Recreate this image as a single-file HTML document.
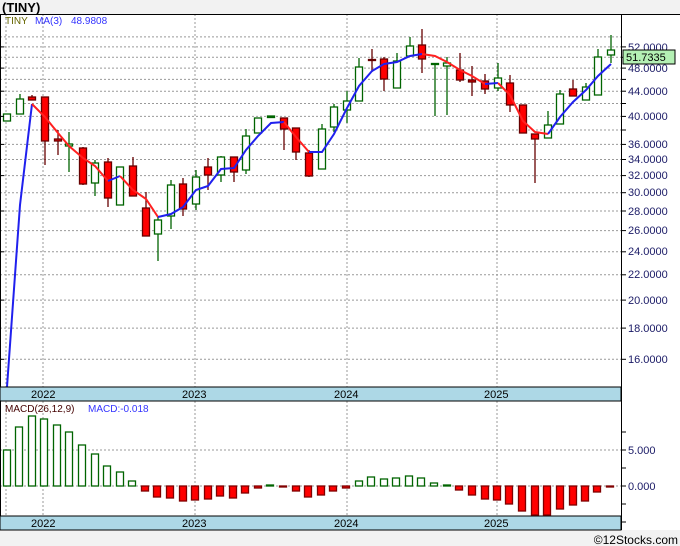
<!DOCTYPE html>
<html><head><meta charset="utf-8"><style>
body{margin:0;background:#f2f2f2;width:680px;height:546px;overflow:hidden;font-family:"Liberation Sans",sans-serif}
svg{position:absolute;left:0;top:0}
</style></head><body>
<svg width="680" height="546" viewBox="0 0 680 546" xmlns="http://www.w3.org/2000/svg" font-family="Liberation Sans, sans-serif">
<rect x="0" y="0" width="680" height="546" fill="#f2f2f2"/>
<text x="2" y="12" font-size="13" font-weight="bold" fill="#000">(TINY)</text>
<rect x="0" y="14" width="680" height="516" fill="#fff"/>
<g stroke="#999" stroke-width="1" stroke-dasharray="2,2">
<line x1="0" x2="621" y1="36.9" y2="36.9"/><line x1="0" x2="621" y1="46.9" y2="46.9"/><line x1="0" x2="621" y1="57.3" y2="57.3"/><line x1="0" x2="621" y1="68.1" y2="68.1"/><line x1="0" x2="621" y1="79.4" y2="79.4"/><line x1="0" x2="621" y1="91.2" y2="91.2"/><line x1="0" x2="621" y1="103.5" y2="103.5"/><line x1="0" x2="621" y1="116.4" y2="116.4"/><line x1="0" x2="621" y1="130" y2="130"/><line x1="0" x2="621" y1="144.4" y2="144.4"/><line x1="0" x2="621" y1="159.5" y2="159.5"/><line x1="0" x2="621" y1="175.6" y2="175.6"/><line x1="0" x2="621" y1="192.7" y2="192.7"/><line x1="0" x2="621" y1="211" y2="211"/><line x1="0" x2="621" y1="230.6" y2="230.6"/><line x1="0" x2="621" y1="251.8" y2="251.8"/><line x1="0" x2="621" y1="274.8" y2="274.8"/><line x1="0" x2="621" y1="300.1" y2="300.1"/><line x1="0" x2="621" y1="328.1" y2="328.1"/><line x1="0" x2="621" y1="359.3" y2="359.3"/>
<line x1="6" x2="6" y1="14" y2="387"/><line x1="43" x2="43" y1="14" y2="387"/><line x1="195" x2="195" y1="14" y2="387"/><line x1="347" x2="347" y1="14" y2="387"/><line x1="497" x2="497" y1="14" y2="387"/>
<line x1="6" x2="6" y1="401" y2="516"/><line x1="43" x2="43" y1="401" y2="516"/><line x1="195" x2="195" y1="401" y2="516"/><line x1="347" x2="347" y1="401" y2="516"/><line x1="497" x2="497" y1="401" y2="516"/>
<line x1="0" x2="621" y1="450" y2="450"/><line x1="0" x2="621" y1="486" y2="486"/>
</g>
<text x="5" y="24" font-size="10" fill="#666600">TINY</text>
<text x="35" y="24" font-size="10" fill="#3333ff">MA(3)</text>
<text x="71" y="24" font-size="10" fill="#3333ff">48.9808</text>
<!-- candles -->
<g stroke-width="1.3">
<g stroke="#006400" fill="#fff">
<rect x="3.5" y="114" width="7" height="7"/>
<line x1="20" x2="20" y1="94" y2="99"/><rect x="16.5" y="99" width="7" height="15"/>
<line x1="69" x2="69" y1="132" y2="172"/><rect x="65.5" y="144" width="7" height="2"/>
<line x1="95" x2="95" y1="160" y2="196"/><rect x="91.5" y="163" width="7" height="20"/>
<rect x="116.5" y="167" width="7" height="38"/>
<line x1="158" x2="158" y1="217" y2="261"/><rect x="154.5" y="220" width="7" height="14"/>
<line x1="171" x2="171" y1="180" y2="229"/><rect x="167.5" y="185" width="7" height="31"/>
<line x1="196" x2="196" y1="170" y2="210"/><rect x="192.5" y="177" width="7" height="27"/>
<line x1="221" x2="221" y1="156" y2="182"/><rect x="217.5" y="157" width="7" height="18"/>
<line x1="246" x2="246" y1="129" y2="174"/><rect x="242.5" y="136" width="7" height="34"/>
<rect x="254.5" y="118" width="7" height="15"/>
<rect x="267.5" y="116" width="7" height="1.5" fill="#006400"/>
<line x1="322" x2="322" y1="124" y2="169"/><rect x="318.5" y="129" width="7" height="40"/>
<line x1="334" x2="334" y1="104" y2="132"/><rect x="330.5" y="107" width="7" height="20"/>
<line x1="347" x2="347" y1="91" y2="123"/><rect x="343.5" y="101" width="7" height="9"/>
<line x1="359" x2="359" y1="58" y2="101"/><rect x="355.5" y="67" width="7" height="34"/>
<line x1="397" x2="397" y1="53" y2="88"/><rect x="393.5" y="61" width="7" height="27"/>
<line x1="410" x2="410" y1="37" y2="56"/><rect x="406.5" y="46" width="7" height="10"/>
<line x1="435" x2="435" y1="64" y2="116"/><rect x="431.5" y="63.5" width="7" height="1" fill="#006400"/>
<line x1="447" x2="447" y1="57" y2="115"/><rect x="443.5" y="63" width="7" height="3"/>
<line x1="498" x2="498" y1="63" y2="91"/><rect x="494.5" y="78" width="7" height="10"/>
<line x1="548" x2="548" y1="111" y2="138"/><rect x="544.5" y="125" width="7" height="13"/>
<line x1="560" x2="560" y1="90" y2="124"/><rect x="556.5" y="94" width="7" height="30"/>
<line x1="586" x2="586" y1="83" y2="100"/><rect x="582.5" y="87" width="7" height="13"/>
<line x1="598" x2="598" y1="49" y2="95"/><rect x="594.5" y="57" width="7" height="38"/>
<line x1="611" x2="611" y1="35" y2="63"/><rect x="607.5" y="50" width="7" height="5"/>
</g>
<g stroke="#660000" fill="#ff0000">
<line x1="32" x2="32" y1="95" y2="100"/><rect x="28.5" y="97" width="7" height="3"/>
<line x1="45" x2="45" y1="97" y2="165"/><rect x="41.5" y="97" width="7" height="44"/>
<line x1="58" x2="58" y1="130" y2="155"/><rect x="54.5" y="139" width="7" height="2"/>
<line x1="83" x2="83" y1="147" y2="185"/><rect x="79.5" y="148" width="7" height="36"/>
<line x1="108" x2="108" y1="158" y2="207"/><rect x="104.5" y="162" width="7" height="36"/>
<line x1="133" x2="133" y1="157" y2="196"/><rect x="129.5" y="166" width="7" height="30"/>
<line x1="146" x2="146" y1="192" y2="236"/><rect x="142.5" y="208" width="7" height="28"/>
<line x1="183" x2="183" y1="178" y2="216"/><rect x="179.5" y="184" width="7" height="25"/>
<line x1="208" x2="208" y1="158" y2="190"/><rect x="204.5" y="167" width="7" height="8"/>
<line x1="234" x2="234" y1="157" y2="182"/><rect x="230.5" y="157" width="7" height="15"/>
<line x1="284" x2="284" y1="118" y2="150"/><rect x="280.5" y="118" width="7" height="11"/>
<line x1="296" x2="296" y1="128" y2="160"/><rect x="292.5" y="128" width="7" height="24"/>
<line x1="309" x2="309" y1="150" y2="177"/><rect x="305.5" y="153" width="7" height="23"/>
<line x1="372" x2="372" y1="49" y2="72"/><rect x="368.5" y="59.5" width="7" height="1"/>
<line x1="384" x2="384" y1="57" y2="91"/><rect x="380.5" y="59" width="7" height="20"/>
<line x1="422" x2="422" y1="29" y2="73"/><rect x="418.5" y="45" width="7" height="14"/>
<line x1="460" x2="460" y1="53" y2="82"/><rect x="456.5" y="70" width="7" height="10"/>
<line x1="472" x2="472" y1="66" y2="96"/><rect x="468.5" y="80" width="7" height="2"/>
<line x1="485" x2="485" y1="74" y2="94"/><rect x="481.5" y="81" width="7" height="8"/>
<line x1="510" x2="510" y1="75" y2="112"/><rect x="506.5" y="83" width="7" height="22"/>
<rect x="519.5" y="105" width="7" height="28"/>
<line x1="535" x2="535" y1="134" y2="183"/><rect x="531.5" y="134" width="7" height="5"/>
<line x1="573" x2="573" y1="80" y2="96"/><rect x="569.5" y="89" width="7" height="7"/>
</g>
</g>
<!-- MA -->
<polyline fill="none" stroke="#2020ee" stroke-width="2" points="7,387 20,205 32,104"/>
<polyline fill="none" stroke="#ff2020" stroke-width="2" points="32,104 45,117 58,133 69,146 83,158 95,166 108,181"/>
<polyline fill="none" stroke="#2020ee" stroke-width="2" points="108,181 120,176"/>
<polyline fill="none" stroke="#ff2020" stroke-width="2" points="120,176 133,190 146,199 158,217"/>
<polyline fill="none" stroke="#2020ee" stroke-width="2" points="158,217 171,214 183,207 196,190 208,186 221,169 234,168 246,150 258,136 271,123 284,122"/>
<polyline fill="none" stroke="#ff2020" stroke-width="2" points="284,122 296,137 309,152"/>
<polyline fill="none" stroke="#2020ee" stroke-width="2" points="309,152 322,152 334,134 347,108 359,86 372,71 384,64 397,62 410,56 422,54"/>
<polyline fill="none" stroke="#ff2020" stroke-width="2" points="422,54 435,56 447,62 460,70 472,76 485,84"/>
<polyline fill="none" stroke="#2020ee" stroke-width="2" points="485,84 498,83"/>
<polyline fill="none" stroke="#ff2020" stroke-width="2" points="498,83 510,95 523,121 535,132 548,134"/>
<polyline fill="none" stroke="#2020ee" stroke-width="2" points="548,134 560,117 573,102 586,90 598,76 611,64"/>
<!-- axes -->
<line x1="0.5" y1="14" x2="0.5" y2="530" stroke="#000"/>
<line x1="0" y1="14.5" x2="680" y2="14.5" stroke="#000"/>
<line x1="621.5" y1="14" x2="621.5" y2="530" stroke="#000"/>
<g stroke="#000"><line x1="0" x2="4" y1="46.9" y2="46.9"/><line x1="0" x2="4" y1="68.1" y2="68.1"/><line x1="0" x2="4" y1="91.2" y2="91.2"/><line x1="0" x2="4" y1="116.4" y2="116.4"/><line x1="0" x2="4" y1="144.4" y2="144.4"/><line x1="0" x2="4" y1="175.6" y2="175.6"/><line x1="0" x2="4" y1="211" y2="211"/><line x1="0" x2="4" y1="251.8" y2="251.8"/><line x1="0" x2="4" y1="300.1" y2="300.1"/><line x1="0" x2="4" y1="359.3" y2="359.3"/>
<line x1="621" x2="626" y1="46.9" y2="46.9"/><line x1="621" x2="626" y1="57.3" y2="57.3"/><line x1="621" x2="626" y1="68.1" y2="68.1"/><line x1="621" x2="626" y1="79.4" y2="79.4"/><line x1="621" x2="626" y1="91.2" y2="91.2"/><line x1="621" x2="626" y1="103.5" y2="103.5"/><line x1="621" x2="626" y1="116.4" y2="116.4"/><line x1="621" x2="626" y1="130" y2="130"/><line x1="621" x2="626" y1="144.4" y2="144.4"/><line x1="621" x2="626" y1="159.5" y2="159.5"/><line x1="621" x2="626" y1="175.6" y2="175.6"/><line x1="621" x2="626" y1="192.7" y2="192.7"/><line x1="621" x2="626" y1="211" y2="211"/><line x1="621" x2="626" y1="230.6" y2="230.6"/><line x1="621" x2="626" y1="251.8" y2="251.8"/><line x1="621" x2="626" y1="274.8" y2="274.8"/><line x1="621" x2="626" y1="300.1" y2="300.1"/><line x1="621" x2="626" y1="328.1" y2="328.1"/><line x1="621" x2="626" y1="359.3" y2="359.3"/>
<line x1="621" x2="626" y1="450" y2="450"/><line x1="621" x2="626" y1="486" y2="486"/><line x1="621" x2="626" y1="468" y2="468"/><line x1="621" x2="626" y1="432" y2="432"/><line x1="621" x2="626" y1="504" y2="504"/><line x1="621" x2="626" y1="522" y2="522"/></g>
<g font-size="11" fill="#1a1a66">
<text x="628" y="51">52.0000</text><text x="628" y="72">48.0000</text><text x="628" y="95">44.0000</text><text x="628" y="120">40.0000</text><text x="628" y="148">36.0000</text><text x="628" y="163">34.0000</text><text x="628" y="179">32.0000</text><text x="628" y="196">30.0000</text><text x="628" y="215">28.0000</text><text x="628" y="234">26.0000</text><text x="628" y="255">24.0000</text><text x="628" y="278">22.0000</text><text x="628" y="304">20.0000</text><text x="628" y="332">18.0000</text><text x="628" y="363">16.0000</text>
<text x="628" y="454">5.000</text><text x="628" y="490">0.000</text>
</g>
<rect x="623" y="50" width="52" height="14" fill="#b4f0b4" stroke="#000" stroke-width="1"/>
<text x="626" y="61" font-size="11" fill="#000">51.7335</text>
<!-- date bands -->
<rect x="0" y="387" width="621" height="14" fill="#add8e6" stroke="#000"/>
<rect x="0" y="516" width="621" height="14" fill="#add8e6" stroke="#000"/>
<g font-size="11" fill="#000">
<text x="31" y="398">2022</text><text x="182" y="398">2023</text><text x="334" y="398">2024</text><text x="484" y="398">2025</text>
<text x="31" y="527">2022</text><text x="182" y="527">2023</text><text x="334" y="527">2024</text><text x="484" y="527">2025</text>
</g>
<text x="5" y="412" font-size="10" fill="#440000">MACD(26,12,9)</text>
<text x="88" y="412" font-size="10" fill="#3333ff">MACD:-0.018</text>
<!-- MACD bars -->
<g stroke="#006400" fill="#fff" stroke-width="1.3">
<rect x="3.5" y="450" width="7" height="36"/><rect x="15.5" y="427" width="7" height="59"/><rect x="28.5" y="416" width="7" height="70"/><rect x="40.5" y="419" width="7" height="67"/><rect x="53.5" y="425" width="7" height="61"/><rect x="65.5" y="432" width="7" height="54"/><rect x="78.5" y="445" width="7" height="41"/><rect x="91.5" y="454" width="7" height="32"/><rect x="103.5" y="466" width="7" height="20"/><rect x="116.5" y="472" width="7" height="14"/><rect x="128.5" y="481" width="7" height="5"/>
<rect x="266.5" y="485" width="7" height="1" fill="#006400"/>
<rect x="355.5" y="481" width="7" height="5"/><rect x="367.5" y="477" width="7" height="9"/><rect x="380.5" y="479" width="7" height="7"/><rect x="392.5" y="478" width="7" height="8"/><rect x="405.5" y="476" width="7" height="10"/><rect x="417.5" y="478" width="7" height="8"/><rect x="430.5" y="483" width="7" height="3"/><rect x="443.5" y="485" width="7" height="1" fill="#006400"/>
</g>
<g stroke="#800000" fill="#ff0000" stroke-width="1.3">
<rect x="141.5" y="486" width="7" height="5"/><rect x="153.5" y="486" width="7" height="11"/><rect x="166.5" y="486" width="7" height="12"/><rect x="179.5" y="486" width="7" height="15"/><rect x="191.5" y="486" width="7" height="14"/><rect x="204.5" y="486" width="7" height="13"/><rect x="216.5" y="486" width="7" height="10"/><rect x="229.5" y="486" width="7" height="12"/><rect x="241.5" y="486" width="7" height="7"/><rect x="254.5" y="486" width="7" height="2"/><rect x="279.5" y="486" width="7" height="1"/><rect x="292.5" y="486" width="7" height="5"/><rect x="304.5" y="486" width="7" height="11"/><rect x="317.5" y="486" width="7" height="9"/><rect x="329.5" y="486" width="7" height="5"/><rect x="342.5" y="486" width="7" height="2"/>
<rect x="455.5" y="486" width="7" height="4"/><rect x="468.5" y="486" width="7" height="9"/><rect x="481.5" y="486" width="7" height="13"/><rect x="493.5" y="486" width="7" height="14"/><rect x="505.5" y="486" width="7" height="18"/><rect x="518.5" y="486" width="7" height="25"/><rect x="531.5" y="486" width="7" height="29"/><rect x="543.5" y="486" width="7" height="29"/><rect x="556.5" y="486" width="7" height="23"/><rect x="569.5" y="486" width="7" height="19"/><rect x="581.5" y="486" width="7" height="15"/><rect x="593.5" y="486" width="7" height="6"/><rect x="606.5" y="486" width="7" height="1"/>
</g>
<text x="678" y="544" font-size="12" fill="#000" text-anchor="end">©12Stocks.com</text>
</svg>
</body></html>
